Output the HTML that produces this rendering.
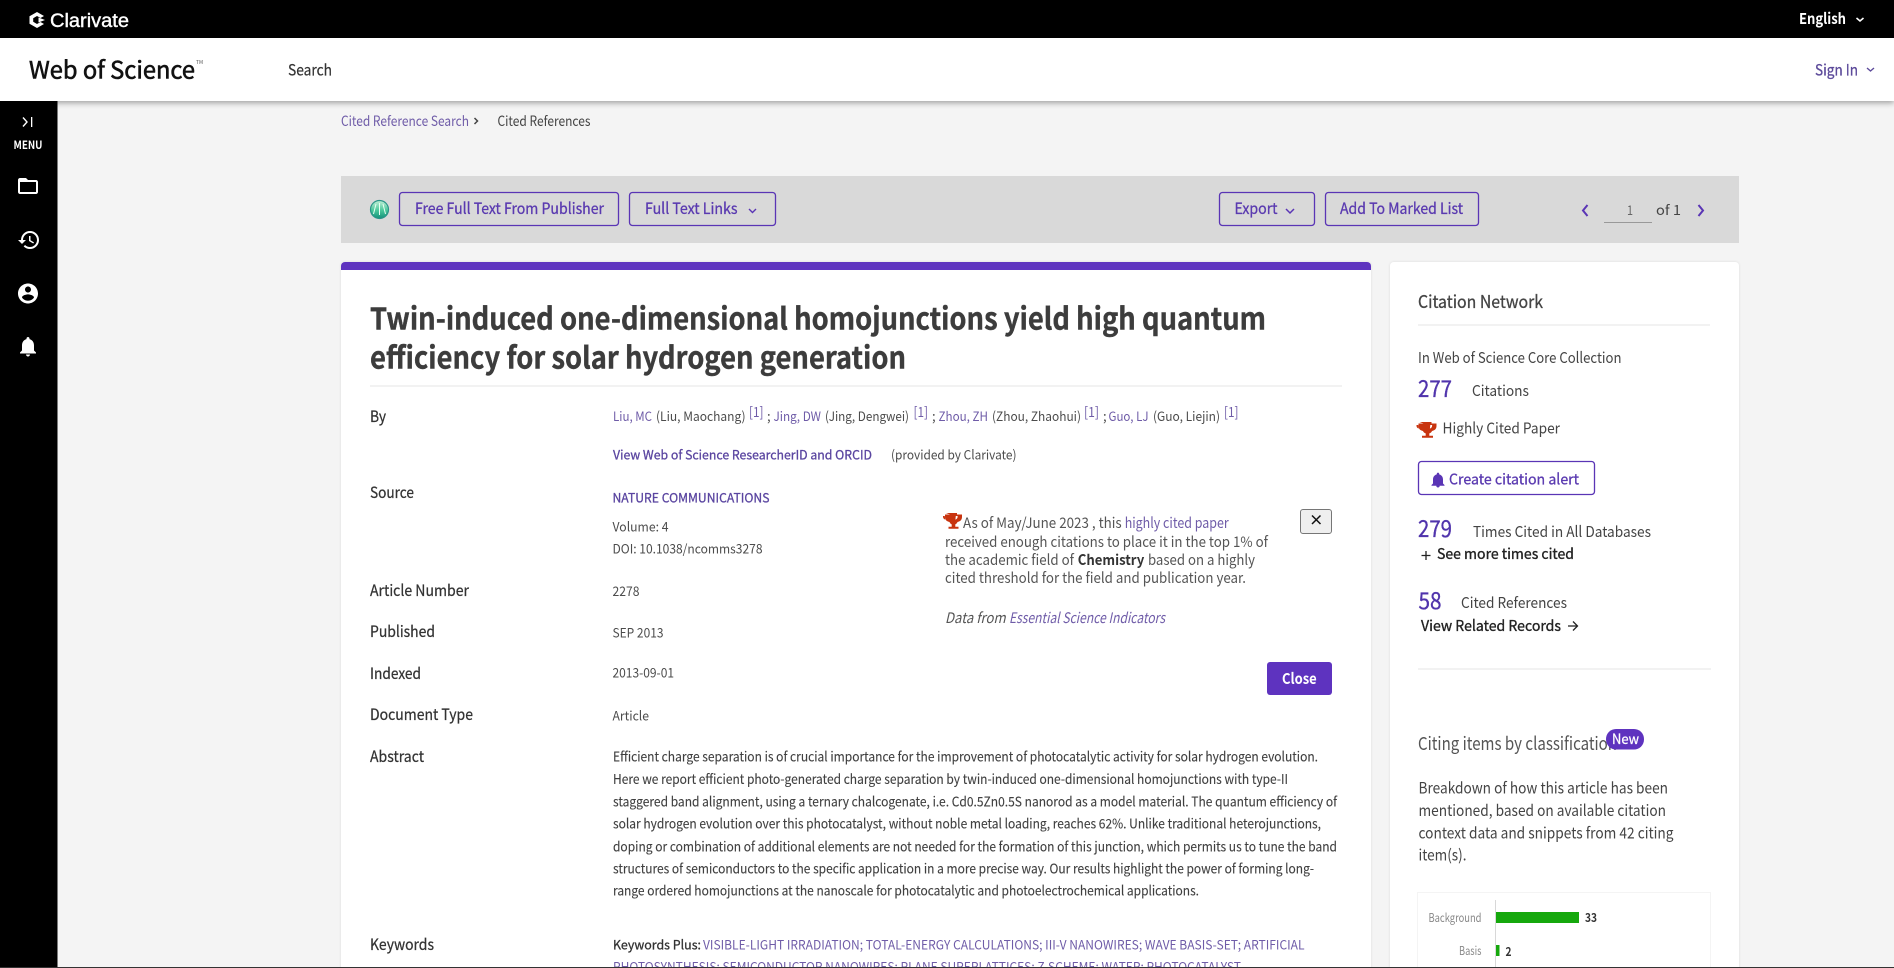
<!DOCTYPE html>
<html lang="en">
<head>
<meta charset="utf-8">
<title>Twin-induced one-dimensional homojunctions yield high quantum efficiency for solar hydrogen generation - Web of Science</title>
<style>
html,body{margin:0;padding:0;width:1894px;height:968px;overflow:hidden;background:#f4f4f4}
svg{display:block}
text{font-family:"Noto Sans CJK JP","Liberation Sans",sans-serif;font-size:14px;fill:#444;white-space:pre}
.lb{font-size:15.5px;fill:#333;stroke:#333;stroke-width:.25px}
.v{font-size:13px;fill:#4c4c4c}
.ab{font-size:13.5px;fill:#3f3f3f;stroke:#3f3f3f;stroke-width:.12px}
.btn{font-size:15.5px;fill:#5a3ab0;stroke:#5a3ab0;stroke-width:.3px}
.r{font-size:15px;fill:#444}
.num{font-size:23px;fill:#5034ac;stroke:#5034ac;stroke-width:.35px}
.bk{font-size:15px;fill:#222;stroke:#222;stroke-width:.35px}
.p{font-size:14.5px;fill:#555}
.v.ln,.p.ln,.ln{fill:#6f5ca8}
.sb{stroke:#5a45a0;stroke-width:.3px;fill:#5a45a0}
</style>
</head>
<body>
<svg xmlns="http://www.w3.org/2000/svg" width="1894" height="968" viewBox="0 0 1894 968">
<defs>
<filter id="sh" x="-5%" y="-50%" width="110%" height="220%"><feDropShadow dx="0" dy="2" stdDeviation="3" flood-color="#000" flood-opacity=".35"/></filter>
<filter id="cs" x="-5%" y="-5%" width="110%" height="110%"><feDropShadow dx="0" dy="0" stdDeviation="1.2" flood-color="#000" flood-opacity=".1"/></filter>
<linearGradient id="gr" x1="0" y1="0" x2="0" y2="1"><stop offset="0" stop-color="#c4f0d8"/><stop offset=".55" stop-color="#49c79a"/><stop offset="1" stop-color="#14917a"/></linearGradient>
</defs>
<rect width="1894" height="968" fill="#f4f4f4"/>

<!-- toolbar -->
<rect x="341" y="176" width="1398" height="67" fill="#d9d9d9"/>
<circle cx="379.500" cy="209.500" r="9" fill="url(#gr)" stroke="#2a9488" stroke-width="1.200"/>
<path d="M379.500 203v12M376 204l-2.500 10M383 204l2.500 10" stroke="#e9fff3" stroke-width="1" fill="none"/>
<g fill="none" stroke="#5a35b5" stroke-width="1.300">
<rect x="399.500" y="192.500" width="219" height="33" rx="3"/>
<rect x="629.500" y="192.500" width="146" height="33" rx="3"/>
<rect x="1219.500" y="192.500" width="95" height="33" rx="3"/>
<rect x="1325.500" y="192.500" width="153" height="33" rx="3"/>
</g>
<text class="btn" x="415" y="214" textLength="189" lengthAdjust="spacingAndGlyphs">Free Full Text From Publisher</text>
<text class="btn" x="645" y="214" textLength="92.500" lengthAdjust="spacingAndGlyphs">Full Text Links</text>
<path d="M749 209l3.500 3.500 3.500-3.500" fill="none" stroke="#5a35b5" stroke-width="1.400"/>
<text class="btn" x="1234.500" y="214" textLength="43" lengthAdjust="spacingAndGlyphs">Export</text>
<path d="M1286 209l4 4 4-4" fill="none" stroke="#5a35b5" stroke-width="1.500"/>
<text class="btn" x="1340" y="214" textLength="123" lengthAdjust="spacingAndGlyphs">Add To Marked List</text>
<path d="M1587.500 205l-4.500 5.500 4.500 5.500M1698.500 205l4.500 5.500-4.500 5.500" fill="none" stroke="#5a35b5" stroke-width="2"/>
<text x="1627" y="215" textLength="6" lengthAdjust="spacingAndGlyphs" style="font-size:13px;fill:#666">1</text>
<rect x="1604" y="222" width="48" height="1" fill="#999"/>
<text x="1656" y="215" textLength="25" lengthAdjust="spacingAndGlyphs" style="fill:#444">of 1</text>

<!-- main card -->
<rect x="341" y="262" width="1030" height="720" rx="4" fill="#fff" filter="url(#cs)"/>
<path d="M341 270v-4a4 4 0 0 1 4-4h1022a4 4 0 0 1 4 4v4z" fill="#5e33bf"/>
<!-- right card -->
<rect x="1390" y="262" width="349" height="720" rx="4" fill="#fff" filter="url(#cs)"/>

<!-- breadcrumb -->
<text x="341" y="126" textLength="128" lengthAdjust="spacingAndGlyphs" class="ln" style="font-size:14px">Cited Reference Search</text>
<path d="M474.500 118l3 3-3 3" fill="none" stroke="#444" stroke-width="1.500"/>
<text x="497.500" y="126" textLength="93" lengthAdjust="spacingAndGlyphs" style="font-size:14px;fill:#444">Cited References</text>

<!-- title -->
<text x="370" y="329.500" textLength="896" lengthAdjust="spacingAndGlyphs" style="font-size:30px;font-weight:700;fill:#3c3c3c;stroke:#3c3c3c;stroke-width:.4px">Twin-induced one-dimensional homojunctions yield high quantum</text>
<text x="370" y="368.500" textLength="536" lengthAdjust="spacingAndGlyphs" style="font-size:30px;font-weight:700;fill:#3c3c3c;stroke:#3c3c3c;stroke-width:.4px">efficiency for solar hydrogen generation</text>
<rect x="370" y="385" width="972" height="2" fill="#f2f2f2"/>

<!-- labels -->
<text class="lb" x="370" y="422" textLength="16" lengthAdjust="spacingAndGlyphs">By</text>
<text class="lb" x="370" y="498" textLength="44" lengthAdjust="spacingAndGlyphs">Source</text>
<text class="lb" x="370" y="596" textLength="99" lengthAdjust="spacingAndGlyphs">Article Number</text>
<text class="lb" x="370" y="637" textLength="65" lengthAdjust="spacingAndGlyphs">Published</text>
<text class="lb" x="370" y="679" textLength="51" lengthAdjust="spacingAndGlyphs">Indexed</text>
<text class="lb" x="370" y="720" textLength="103" lengthAdjust="spacingAndGlyphs">Document Type</text>
<text class="lb" x="370" y="762" textLength="54" lengthAdjust="spacingAndGlyphs">Abstract</text>
<text class="lb" x="370" y="950" textLength="64" lengthAdjust="spacingAndGlyphs">Keywords</text>

<!-- authors -->
<text class="v ln" x="613" y="421" textLength="39" lengthAdjust="spacingAndGlyphs">Liu, MC</text>
<text class="v" x="656" y="421" textLength="89.500" lengthAdjust="spacingAndGlyphs">(Liu, Maochang)</text>
<text class="ln" x="749" y="417" textLength="14.500" lengthAdjust="spacingAndGlyphs">[1]</text>
<text class="v" x="767" y="421">;</text>
<text class="v ln" x="773.500" y="421" textLength="47.500" lengthAdjust="spacingAndGlyphs">Jing, DW</text>
<text class="v" x="825" y="421" textLength="84" lengthAdjust="spacingAndGlyphs">(Jing, Dengwei)</text>
<text class="ln" x="913.500" y="417" textLength="14.500" lengthAdjust="spacingAndGlyphs">[1]</text>
<text class="v" x="932" y="421">;</text>
<text class="v ln" x="938.500" y="421" textLength="49.500" lengthAdjust="spacingAndGlyphs">Zhou, ZH</text>
<text class="v" x="992" y="421" textLength="89" lengthAdjust="spacingAndGlyphs">(Zhou, Zhaohui)</text>
<text class="ln" x="1084" y="417" textLength="15" lengthAdjust="spacingAndGlyphs">[1]</text>
<text class="v" x="1103" y="421">;</text>
<text class="v ln" x="1108.500" y="421" textLength="40" lengthAdjust="spacingAndGlyphs">Guo, LJ</text>
<text class="v" x="1153" y="421" textLength="67" lengthAdjust="spacingAndGlyphs">(Guo, Liejin)</text>
<text class="ln" x="1224" y="417" textLength="14.500" lengthAdjust="spacingAndGlyphs">[1]</text>
<text class="v sb" x="613" y="459.500" textLength="259" lengthAdjust="spacingAndGlyphs">View Web of Science ResearcherID and ORCID</text>
<text class="v" x="891" y="459.500" textLength="125.500" lengthAdjust="spacingAndGlyphs">(provided by Clarivate)</text>

<!-- values -->
<text class="v sb" x="612.500" y="502.500" textLength="157" lengthAdjust="spacingAndGlyphs">NATURE COMMUNICATIONS</text>
<text class="v" x="612.500" y="531.500" textLength="56" lengthAdjust="spacingAndGlyphs">Volume: 4</text>
<text class="v" x="612.500" y="553.500" textLength="150" lengthAdjust="spacingAndGlyphs">DOI: 10.1038/ncomms3278</text>
<text class="v" x="612.500" y="596" textLength="27" lengthAdjust="spacingAndGlyphs">2278</text>
<text class="v" x="612.500" y="637.500" textLength="51" lengthAdjust="spacingAndGlyphs">SEP 2013</text>
<text class="v" x="612.500" y="677.500" textLength="61.500" lengthAdjust="spacingAndGlyphs">2013-09-01</text>
<text class="v" x="612.500" y="720.500" textLength="36.500" lengthAdjust="spacingAndGlyphs">Article</text>

<!-- abstract -->
<text class="ab" x="613" y="761.500" textLength="705" lengthAdjust="spacingAndGlyphs">Efficient charge separation is of crucial importance for the improvement of photocatalytic activity for solar hydrogen evolution.</text>
<text class="ab" x="613" y="784" textLength="675" lengthAdjust="spacingAndGlyphs">Here we report efficient photo-generated charge separation by twin-induced one-dimensional homojunctions with type-II</text>
<text class="ab" x="613" y="806.500" textLength="724" lengthAdjust="spacingAndGlyphs">staggered band alignment, using a ternary chalcogenate, i.e. Cd0.5Zn0.5S nanorod as a model material. The quantum efficiency of</text>
<text class="ab" x="613" y="828.500" textLength="708" lengthAdjust="spacingAndGlyphs">solar hydrogen evolution over this photocatalyst, without noble metal loading, reaches 62%. Unlike traditional heterojunctions,</text>
<text class="ab" x="613" y="851.500" textLength="724" lengthAdjust="spacingAndGlyphs">doping or combination of additional elements are not needed for the formation of this junction, which permits us to tune the band</text>
<text class="ab" x="613" y="873.500" textLength="701" lengthAdjust="spacingAndGlyphs">structures of semiconductors to the specific application in a more precise way. Our results highlight the power of forming long-</text>
<text class="ab" x="613" y="895.500" textLength="586" lengthAdjust="spacingAndGlyphs">range ordered homojunctions at the nanoscale for photocatalytic and photoelectrochemical applications.</text>

<!-- keywords -->
<text class="v" x="613" y="949.500" textLength="88" lengthAdjust="spacingAndGlyphs" style="fill:#333;stroke:#333;stroke-width:.3px">Keywords Plus:</text>
<text class="v ln" x="703" y="949.500" textLength="601.500" lengthAdjust="spacingAndGlyphs">VISIBLE-LIGHT IRRADIATION; TOTAL-ENERGY CALCULATIONS; III-V NANOWIRES; WAVE BASIS-SET; ARTIFICIAL</text>
<text class="v ln" x="613" y="971.500" textLength="628" lengthAdjust="spacingAndGlyphs">PHOTOSYNTHESIS; SEMICONDUCTOR NANOWIRES; PLANE SUPERLATTICES; Z-SCHEME; WATER; PHOTOCATALYST</text>

<!-- popover -->
<path d="M946 513h11v1.500h5v2.500c0 3-2 4.500-4.500 5-.5 1.200-1.300 2-2.200 2.400v2.300h3.200v2h-10v-2h3.200v-2.300c-.9-.4-1.700-1.200-2.200-2.400-2.500-.5-4.500-2-4.500-5v-2.500h5zm-3 3v.8c0 1.400.8 2.300 2.200 2.800l-.4-3.600zm14.600 0h-1.800l-.4 3.600c1.400-.5 2.200-1.400 2.200-2.800z" fill="#c8340f"/>
<text class="p" x="963" y="528" textLength="158.700" lengthAdjust="spacingAndGlyphs">As of May/June 2023 , this</text>
<text class="p ln" x="1124.700" y="528" textLength="104" lengthAdjust="spacingAndGlyphs">highly cited paper</text>
<text class="p" x="945" y="547" textLength="323" lengthAdjust="spacingAndGlyphs">received enough citations to place it in the top 1% of</text>
<text class="p" x="945" y="565" textLength="129" lengthAdjust="spacingAndGlyphs">the academic field of</text>
<text class="p" x="1077.700" y="565" textLength="66.600" lengthAdjust="spacingAndGlyphs" style="font-weight:700;fill:#333">Chemistry</text>
<text class="p" x="1148" y="565" textLength="107" lengthAdjust="spacingAndGlyphs">based on a highly</text>
<text class="p" x="945" y="583" textLength="301" lengthAdjust="spacingAndGlyphs">cited threshold for the field and publication year.</text>
<text class="p" x="945" y="623" textLength="60.700" lengthAdjust="spacingAndGlyphs" font-style="italic">Data from</text>
<text class="p ln" x="1009" y="623" textLength="156" lengthAdjust="spacingAndGlyphs" font-style="italic">Essential Science Indicators</text>
<rect x="1300.500" y="509.500" width="31" height="24" rx="2.500" fill="#efefef" stroke="#767676"/>
<path d="M1312 515.500l8.500 8.500M1320.500 515.500l-8.500 8.500" stroke="#111" stroke-width="1.500"/>
<rect x="1267" y="662" width="65" height="33" rx="3" fill="#5e33bf"/>
<text x="1282" y="684" textLength="34.700" lengthAdjust="spacingAndGlyphs" style="font-size:15px;font-weight:700;fill:#fff">Close</text>

<!-- citation network -->
<text x="1418" y="308" textLength="125" lengthAdjust="spacingAndGlyphs" style="font-size:17.500px;fill:#444;stroke:#444;stroke-width:.3px">Citation Network</text>
<rect x="1418" y="324" width="292" height="2" fill="#f2f2f2"/>
<text class="r" x="1418" y="363" textLength="203.500" lengthAdjust="spacingAndGlyphs">In Web of Science Core Collection</text>
<text class="num" x="1418" y="397" textLength="34" lengthAdjust="spacingAndGlyphs">277</text>
<text class="r" x="1472" y="396" textLength="57" lengthAdjust="spacingAndGlyphs">Citations</text>
<path d="M1420 422h12v1.500h5v2.500c0 3-2 4.500-4.500 5-.5 1.200-1.300 2-2.700 2.400v2.300h3.700v2h-11v-2h3.700v-2.300c-1.400-.4-2.200-1.200-2.700-2.400-2.500-.5-4.500-2-4.500-5v-2.500h5zm-3 3v.8c0 1.400.8 2.300 2.200 2.800l-.4-3.600zm15.600 0h-1.800l-.4 3.600c1.400-.5 2.200-1.400 2.200-2.800z" fill="#c8340f" transform="translate(-.5 0)"/>
<text class="r" x="1442.500" y="433.500" textLength="117.500" lengthAdjust="spacingAndGlyphs">Highly Cited Paper</text>

<rect x="1418.500" y="461.500" width="176" height="33" rx="3" fill="#fff" stroke="#5a35b5" stroke-width="1.300"/>
<path d="M1438 487.500c1 0 1.700-.7 1.700-1.700h-3.400c0 1 .7 1.700 1.700 1.700zm5-4v-4c0-2.500-1.400-4.500-3.800-5.100v-.6c0-.7-.5-1.200-1.200-1.200s-1.200.5-1.200 1.200v.6c-2.400.6-3.800 2.600-3.800 5.100v4l-1.500 1.500v.7h13v-.7z" fill="#5a35b5"/>
<text class="btn" x="1449" y="484.500" textLength="130" lengthAdjust="spacingAndGlyphs" style="font-size:15px">Create citation alert</text>

<text class="num" x="1418" y="537" textLength="34" lengthAdjust="spacingAndGlyphs">279</text>
<text class="r" x="1473" y="537" textLength="178" lengthAdjust="spacingAndGlyphs">Times Cited in All Databases</text>
<path d="M1421.500 555.500h9M1426 551v9" stroke="#222" stroke-width="1.300"/>
<text class="bk" x="1437" y="559" textLength="137" lengthAdjust="spacingAndGlyphs">See more times cited</text>

<text class="num" x="1418.500" y="609" textLength="23" lengthAdjust="spacingAndGlyphs">58</text>
<text class="r" x="1461" y="608" textLength="106" lengthAdjust="spacingAndGlyphs">Cited References</text>
<text class="bk" x="1421" y="631" textLength="140" lengthAdjust="spacingAndGlyphs">View Related Records</text>
<path d="M1568 626h9M1573 621.500l4.500 4.500-4.500 4.500" fill="none" stroke="#222" stroke-width="1.300"/>

<rect x="1418" y="668" width="293" height="2" fill="#f2f2f2"/>

<text x="1418" y="750" textLength="199" lengthAdjust="spacingAndGlyphs" style="font-size:18px;fill:#555">Citing items by classification</text>
<rect x="1606" y="729" width="38" height="20.500" rx="10" fill="#5e33bf"/>
<text x="1612" y="744" textLength="27" lengthAdjust="spacingAndGlyphs" style="font-size:14px;fill:#fff;stroke:#fff;stroke-width:.25px">New</text>

<text class="r" x="1418.500" y="793.500" textLength="249.500" lengthAdjust="spacingAndGlyphs" style="font-size:15.500px">Breakdown of how this article has been</text>
<text class="r" x="1418.500" y="816" textLength="247.500" lengthAdjust="spacingAndGlyphs" style="font-size:15.500px">mentioned, based on available citation</text>
<text class="r" x="1418.500" y="838.500" textLength="255" lengthAdjust="spacingAndGlyphs" style="font-size:15.500px">context data and snippets from 42 citing</text>
<text class="r" x="1418.500" y="860.500" textLength="48" lengthAdjust="spacingAndGlyphs" style="font-size:15.500px">item(s).</text>

<!-- chart -->
<path d="M1417.500 968V892.500h293V968" fill="none" stroke="#f4f4f4"/>
<rect x="1495" y="900" width="1" height="68" fill="#d8d8d8"/>
<rect x="1496" y="912" width="83" height="11" fill="#16a80d"/>
<rect x="1496" y="945" width="3.500" height="11" fill="#16a80d"/>
<text x="1428.500" y="922" textLength="53" lengthAdjust="spacingAndGlyphs" style="font-size:12px;fill:#888">Background</text>
<text x="1459" y="955" textLength="22.500" lengthAdjust="spacingAndGlyphs" style="font-size:12px;fill:#888">Basis</text>
<text x="1585" y="922" textLength="12" lengthAdjust="spacingAndGlyphs" style="font-size:12px;font-weight:700;fill:#333">33</text>
<text x="1505.500" y="956" textLength="6" lengthAdjust="spacingAndGlyphs" style="font-size:12px;font-weight:700;fill:#333">2</text>

<!-- header -->
<rect y="38" width="1894" height="63" fill="#fff" filter="url(#sh)"/>
<rect width="1894" height="38" fill="#000"/>
<path d="M37 12l7 4-3.500 2-3.500-2-3.800 2.200v3.600l3.800 2.200 3.500-2 3.500 2-7 4-7.500-4.200v-7.600z" fill="#fff"/>
<path d="M38.500 17.500l6.500 2.500-6.500 2.500z" fill="#fff"/>
<text x="50" y="27" textLength="79" lengthAdjust="spacingAndGlyphs" style="font-family:'Liberation Sans',sans-serif;font-size:19.500px;fill:#fff;stroke:#fff;stroke-width:.4px">Clarivate</text>
<text x="1799" y="24" textLength="47" lengthAdjust="spacingAndGlyphs" style="font-size:15px;font-weight:700;fill:#fff">English</text>
<path d="M1856.500 18l3.500 3 3.500-3" fill="none" stroke="#fff" stroke-width="1.600"/>
<text x="29" y="78.500" textLength="166" lengthAdjust="spacingAndGlyphs" style="font-size:24px;fill:#111;stroke:#111;stroke-width:.6px">Web of Science</text>
<text x="196" y="64" style="font-size:5px;fill:#555">TM</text>
<text x="288" y="75.500" textLength="44" lengthAdjust="spacingAndGlyphs" style="font-size:15.500px;fill:#333;stroke:#333;stroke-width:.2px">Search</text>
<text x="1815" y="75.500" textLength="43" lengthAdjust="spacingAndGlyphs" style="font-size:15.500px;fill:#5c4a9a;stroke:#5c4a9a;stroke-width:.3px">Sign In</text>
<path d="M1867 68l3.500 3 3.500-3" fill="none" stroke="#5c4a9a" stroke-width="1.400"/>

<!-- sidebar -->
<rect y="101" width="57.500" height="867" fill="#000"/>
<path d="M23 117.500l4 4.500-4 4.500" fill="none" stroke="#fff" stroke-width="1.400"/>
<rect x="31" y="117" width="1.300" height="10" fill="#fff"/>
<text x="13.500" y="149" textLength="29" lengthAdjust="spacingAndGlyphs" style="font-size:11px;font-weight:700;fill:#fff">MENU</text>
<path transform="translate(16 174)" fill="#fff" d="M20 6h-8l-2-2H4c-1.100 0-2 .9-2 2v12c0 1.100.9 2 2 2h16c1.100 0 2-.9 2-2V8c0-1.100-.9-2-2-2zm0 12H4V8h16v10z"/>
<path transform="translate(17 228)" fill="#fff" d="M13 3a9 9 0 0 0-9 9H1l3.890 3.890.07.14L9 12H6c0-3.870 3.130-7 7-7s7 3.130 7 7-3.130 7-7 7c-1.930 0-3.680-.79-4.940-2.060l-1.420 1.420A8.954 8.954 0 0 0 13 21a9 9 0 0 0 0-18zm-1 5v5l4.280 2.540.72-1.210-3.500-2.080V8H12z"/>
<path transform="translate(16 281.500)" fill="#fff" d="M12 2C6.480 2 2 6.480 2 12s4.480 10 10 10 10-4.480 10-10S17.520 2 12 2zm0 3c1.660 0 3 1.340 3 3s-1.340 3-3 3-3-1.340-3-3 1.340-3 3-3zm0 14.200c-2.500 0-4.710-1.280-6-3.220.03-1.990 4-3.080 6-3.080 1.990 0 5.970 1.090 6 3.080-1.290 1.940-3.500 3.220-6 3.220z"/>
<path transform="translate(16 334.500)" fill="#fff" d="M12 22c1.100 0 2-.9 2-2h-4c0 1.100.9 2 2 2zm6-6v-5c0-3.070-1.630-5.640-4.500-6.320V4c0-.83-.67-1.500-1.500-1.500s-1.500.67-1.500 1.500v.68C7.640 5.360 6 7.920 6 11v5l-2 2v1h16v-1l-2-2z"/>

<!-- bottom edge -->
<rect y="967" width="1894" height="1" fill="#333"/>
</svg>
</body>
</html>
